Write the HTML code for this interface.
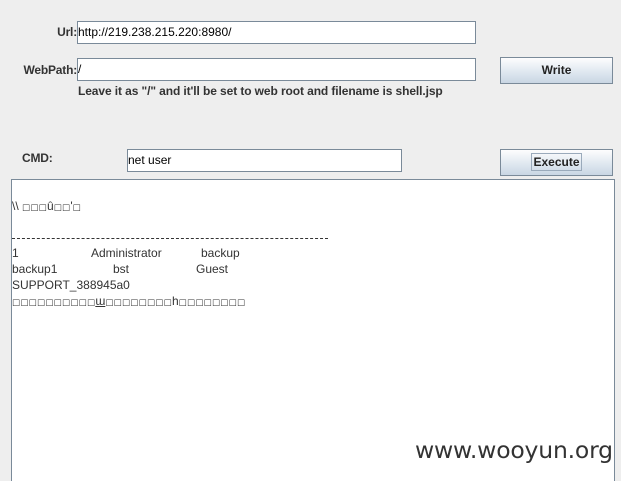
<!DOCTYPE html>
<html><head><meta charset="utf-8"><style>
body{margin:0;width:621px;height:480px;background:#eeeeee;position:relative;overflow:hidden;font-family:"Liberation Sans",Arial,sans-serif;}
.a{position:absolute;}
.lbl{font-size:12px;font-weight:bold;color:#333;letter-spacing:-0.2px;}
.fld{background:#fff;border:1px solid #7a8a99;box-sizing:border-box;font-size:12px;color:#000;padding:2px 0px;line-height:16px;}
.btn{border:1px solid #7a8a99;box-sizing:border-box;background:linear-gradient(#fdfdfe,#dde6ef 60%,#c9d6e3);font-size:12px;font-weight:bold;color:#222;text-align:center;}
.ta{background:#fff;border:1px solid #7a8a99;border-bottom:none;box-sizing:border-box;}
.t{font-size:12px;color:#333;white-space:pre;line-height:16px;}
.bx{font-family:"DejaVu Sans",sans-serif;font-size:8.5px;letter-spacing:0.3px;}
</style></head><body>
<div class="a lbl" style="right:544px;top:25px;">Url:</div>
<div class="a fld" style="left:77px;top:21px;width:399px;height:23px;">http://219.238.215.220:8980/</div>
<div class="a lbl" style="right:544px;top:63px;">WebPath:</div>
<div class="a fld" style="left:77px;top:58px;width:399px;height:23px;">/</div>
<div class="a btn" style="left:500px;top:57px;width:113px;height:27px;line-height:25px;">Write</div>
<div class="a lbl" style="left:78px;top:84px;letter-spacing:-0.1px;">Leave it as "/" and it'll be set to web root and filename is shell.jsp</div>
<div class="a lbl" style="left:22px;top:151px;">CMD:</div>
<div class="a fld" style="left:127px;top:149px;width:275px;height:23px;">net user</div>
<div class="a btn" style="left:500px;top:149px;width:113px;height:27px;line-height:25px;"><span style="border:1px solid #9aaabb;padding:1px 1px;">Execute</span></div>
<div class="a ta" style="left:11px;top:179px;width:604px;height:302px;"></div>
<div class="a t" style="left:12px;top:198px;">\\ <span class="bx">□□□</span>û<span class="bx">□□</span>'<span class="bx">□</span></div>
<div class="a" style="left:12px;top:238px;width:316px;border-top:1px dashed #333;"></div>
<div class="a t" style="left:12px;top:245px;">1</div>
<div class="a t" style="left:91px;top:245px;">Administrator</div>
<div class="a t" style="left:201px;top:245px;">backup</div>
<div class="a t" style="left:12px;top:261px;">backup1</div>
<div class="a t" style="left:113px;top:261px;">bst</div>
<div class="a t" style="left:196px;top:261px;">Guest</div>
<div class="a t" style="left:12px;top:277px;">SUPPORT_388945a0</div>
<div class="a t" style="left:12px;top:293px;"><span class="bx">□□□□□□□□□□</span><u>ɯ</u><span class="bx">□□□□□□□□</span>h<span class="bx">□□□□□□□□</span></div>
<div class="a" style="left:415px;top:436px;font-size:23.5px;color:#333;font-family:'DejaVu Sans',sans-serif;letter-spacing:-0.2px;">www.wooyun.org</div>
</body></html>
